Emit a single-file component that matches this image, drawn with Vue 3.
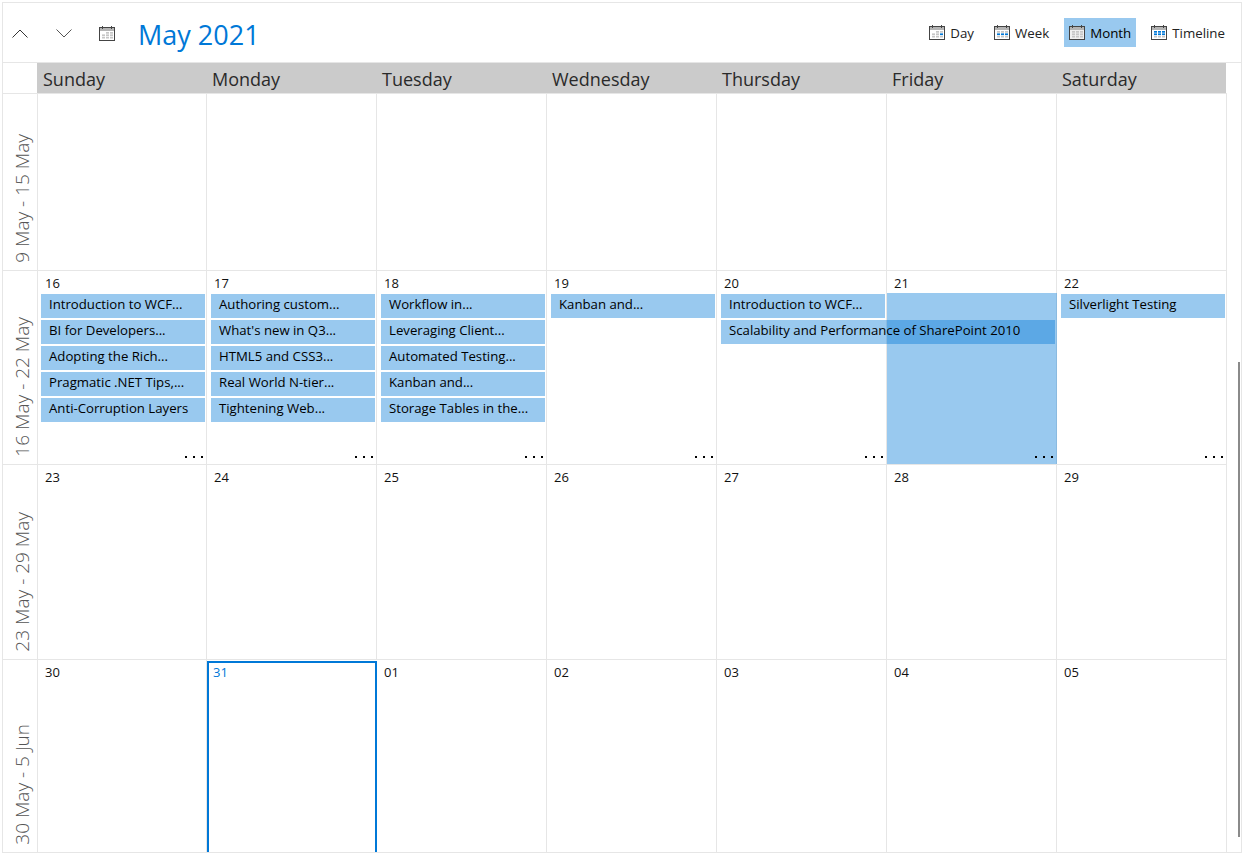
<script setup>
const days = ['Sunday', 'Monday', 'Tuesday', 'Wednesday', 'Thursday', 'Friday', 'Saturday']

const GRAY = '#c6c6c6'
const BLUE = '#0078d7'
const rowsY = [6, 8.4, 10.8]
const colsX = [3, 7, 11]

function gridCells(kind) {
  const out = []
  rowsY.forEach((y, r) => {
    colsX.forEach((x, c) => {
      if ((kind === 'main' || kind === 'Day') && r === 0 && c === 0) return
      let fill = GRAY
      if (kind === 'Day' && r === 1 && c === 2) fill = BLUE
      if (kind === 'Week' && r === 1) fill = BLUE
      if (kind === 'Timeline' && r < 2) fill = BLUE
      out.push({ x, y, w: 3, h: 1.7, fill, key: r + '-' + c })
    })
  })
  return out
}

const mainCells = gridCells('main')

const views = [
  { name: 'Day', active: false, cells: gridCells('Day') },
  { name: 'Week', active: false, cells: gridCells('Week') },
  { name: 'Month', active: true, cells: gridCells('Month') },
  { name: 'Timeline', active: false, cells: gridCells('Timeline') }
]

const weeks = [
  { label: '9 May - 15 May', height: 'w1', cells: [] },
  {
    label: '16 May - 22 May',
    height: 'w2',
    more: true,
    cells: [
      { n: '16', ev: ['Introduction to WCF...', 'BI for Developers...', 'Adopting the Rich...', 'Pragmatic .NET Tips,...', 'Anti-Corruption Layers'] },
      { n: '17', ev: ['Authoring custom...', "What's new in Q3...", 'HTML5 and CSS3...', 'Real World N-tier...', 'Tightening Web...'] },
      { n: '18', ev: ['Workflow in...', 'Leveraging Client...', 'Automated Testing...', 'Kanban and...', 'Storage Tables in the...'] },
      { n: '19', ev: ['Kanban and...'] },
      { n: '20', ev: ['Introduction to WCF...'], span: 'Scalability and Performance of SharePoint 2010' },
      { n: '21', ev: [], selected: true },
      { n: '22', ev: ['Silverlight Testing'] }
    ]
  },
  { label: '23 May - 29 May', height: 'w3', cells: ['23', '24', '25', '26', '27', '28', '29'].map(n => ({ n, ev: [] })) },
  {
    label: '30 May - 5 Jun',
    height: 'w4',
    cells: ['30', '31', '01', '02', '03', '04', '05'].map(n => ({ n, ev: [], today: n === '31' }))
  }
]
</script>

<template>
  <div class="page">
    <div class="scheduler">
      <div class="main">
        <header class="toolbar">
          <button class="nav nav-up" aria-label="Previous">
            <svg width="16" height="9" viewBox="0 0 16 9"><path d="M0.5 8.5 8 1l7.5 7.5" fill="none" stroke="#333" stroke-width="1" /></svg>
          </button>
          <button class="nav nav-down" aria-label="Next">
            <svg width="16" height="9" viewBox="0 0 16 9"><path d="M0.5 0.5 8 8l7.5-7.5" fill="none" stroke="#555" stroke-width="1" /></svg>
          </button>
          <svg class="cal-main" width="16" height="15" viewBox="0 0 16 15">
            <rect x="0.5" y="1.5" width="15" height="13" fill="#fff" stroke="#444" />
            <rect x="1" y="2" width="14" height="3" fill="#b4b4b4" />
            <rect x="3" y="0" width="1" height="3" fill="#444" />
            <rect x="12" y="0" width="1" height="3" fill="#444" />
            <rect v-for="c in mainCells" :key="c.key" :x="c.x" :y="c.y" :width="c.w" :height="c.h" :fill="c.fill" />
          </svg>
          <h1 class="title">May 2021</h1>
          <nav class="views">
            <div v-for="v in views" :key="v.name" class="view" :class="{ active: v.active }">
              <svg width="16" height="15" viewBox="0 0 16 15">
                <rect x="0.5" y="1.5" width="15" height="13" :fill="v.active ? '#efefef' : '#fff'" stroke="#444" />
                <rect x="1" y="2" width="14" height="3" fill="#b4b4b4" />
                <rect x="3" y="0" width="1" height="3" fill="#444" />
                <rect x="12" y="0" width="1" height="3" fill="#444" />
                <rect v-for="c in v.cells" :key="c.key" :x="c.x" :y="c.y" :width="c.w" :height="c.h" :fill="c.fill" />
              </svg>
              <span>{{ v.name }}</span>
            </div>
          </nav>
        </header>

        <div class="head-row">
          <div class="corner"></div>
          <div v-for="d in days" :key="d" class="day-name">{{ d }}</div>
        </div>

        <div v-for="w in weeks" :key="w.label" class="week" :class="w.height">
          <div class="week-label"><span>{{ w.label }}</span></div>
          <template v-if="w.cells.length">
            <div
              v-for="c in w.cells"
              :key="c.n"
              class="cell"
              :class="{ today: c.today }"
            >
              <div v-if="c.selected" class="selection"></div>
              <div class="num">{{ c.n }}</div>
              <div class="events">
                <div v-for="e in c.ev" :key="e" class="event">{{ e }}</div>
                <div v-if="c.span" class="event span">{{ c.span }}</div>
              </div>
              <div v-if="w.more" class="more">
                <i></i><i></i><i></i>
              </div>
            </div>
          </template>
          <template v-else>
            <div v-for="d in days" :key="d" class="cell"></div>
          </template>
        </div>
      </div>
      <div class="scrollbar"><div class="thumb"></div></div>
    </div>
  </div>
</template>

<style>
html, body { margin: 0; background: #fff; }
</style>

<style scoped>
.page {
  width: 1245px;
  height: 861px;
  box-sizing: border-box;
  padding: 2px 3px 8px 2px;
  font-family: "Open Sans", "Noto Sans", sans-serif;
  color: #000;
  background: #fff;
}
.scheduler {
  display: flex;
  height: 100%;
  box-sizing: border-box;
  border: 1px solid #e6e6e6;
  overflow: hidden;
}
.main { width: 1224px; flex: none; }
.toolbar {
  height: 60px;
  margin-bottom: -1px;
  box-sizing: border-box;
  border-bottom: 1px solid #e6e6e6;
  display: flex;
  align-items: center;
  width: 1238px;
  position: relative;
}
.nav {
  border: 0;
  padding: 0;
  background: none;
  width: 16px;
  height: 9px;
  display: block;
}
.nav svg { display: block; }
.nav-up { margin-left: 9px; margin-top: 1px; }
.nav-down { margin-left: 28px; margin-top: 1px; }
.cal-main { margin-left: 27px; margin-top: 1px; }
.title {
  margin: 4px 0 0 23px;
  font-weight: 400;
  font-size: 27px;
  line-height: 34px;
  color: #0078d7;
}
.views {
  margin-left: auto;
  margin-right: 11px;
  display: flex;
  align-items: center;
  gap: 10px;
}
.view {
  display: flex;
  align-items: center;
  height: 29px;
  padding: 0 5px;
  gap: 5px;
  font-size: 13.3px;
  color: #222;
}
.view.active { background: rgba(0, 120, 215, 0.4); color: #000; }
.head-row { display: flex; height: 31px; }
.corner { width: 34px; flex: none; }
.day-name {
  width: 170px;
  flex: none;
  box-sizing: border-box;
  background: #cbcbcb;
  padding-left: 5px;
  padding-top: 2px;
  font-size: 18px;
  line-height: 31px;
  height: 31px;
  color: #2a2a2a;
}
.day-name:nth-child(2) { padding-left: 6px; }
.day-name:last-child { width: 169px; }
.week {
  display: flex;
  box-sizing: border-box;
  border-top: 1px solid #e6e6e6;
}
.w1 { height: 177px; }
.w2 { height: 194px; }
.w3 { height: 195px; }
.w4 { height: 193px; }
.week-label {
  width: 34px;
  flex: none;
  box-sizing: border-box;
  display: flex;
  align-items: flex-end;
  justify-content: center;
  padding: 0 0 7px 4px;
}
.week-label span {
  writing-mode: vertical-rl;
  transform: rotate(180deg);
  font-size: 19px;
  line-height: 22px;
  color: #555;
  white-space: nowrap;
  font-weight: 300;
}
.cell {
  width: 170px;
  flex: none;
  box-sizing: border-box;
  border-right: 1px solid #e6e6e6;
  position: relative;
  padding: 3px 0 0 7px;
}
.cell:nth-child(2) { border-left: 1px solid #e6e6e6; }
.cell:nth-child(2) .events { margin-left: -4px; }
.num { line-height: 18px; height: 20px; font-size: 13px; color: #111; }
.events {
  display: flex;
  flex-direction: column;
  gap: 2px;
  margin-left: -3px;
}
.event {
  height: 24px;
  width: 164px;
  box-sizing: border-box;
  background: rgba(0, 120, 215, 0.4);
  padding-left: 8px;
  line-height: 20px;
  font-size: 13.2px;
  white-space: nowrap;
  color: #000;
}
.event.span { width: 334px; position: relative; z-index: 1; }
.selection {
  position: absolute;
  top: 22px;
  left: 0;
  right: -1px;
  bottom: 0;
  background: rgba(0, 120, 215, 0.4);
}
.cell.today {
  border: 2px solid #0078d7;
  border-bottom: 0;
  margin-top: 1px;
  padding: 0 0 0 4px;
}
.cell.today .num { color: #0078d7; }
.more {
  position: absolute;
  right: 3px;
  bottom: 6px;
  display: flex;
  gap: 6px;
}
.more i { width: 2px; height: 2px; background: #000; display: block; }
.scrollbar {
  flex: none;
  width: 14px;
  margin-left: 1px;
  position: relative;
}
.thumb {
  position: absolute;
  top: 359px;
  bottom: 15px;
  left: 10px;
  width: 2px;
  background: #8a8a8a;
}
</style>
